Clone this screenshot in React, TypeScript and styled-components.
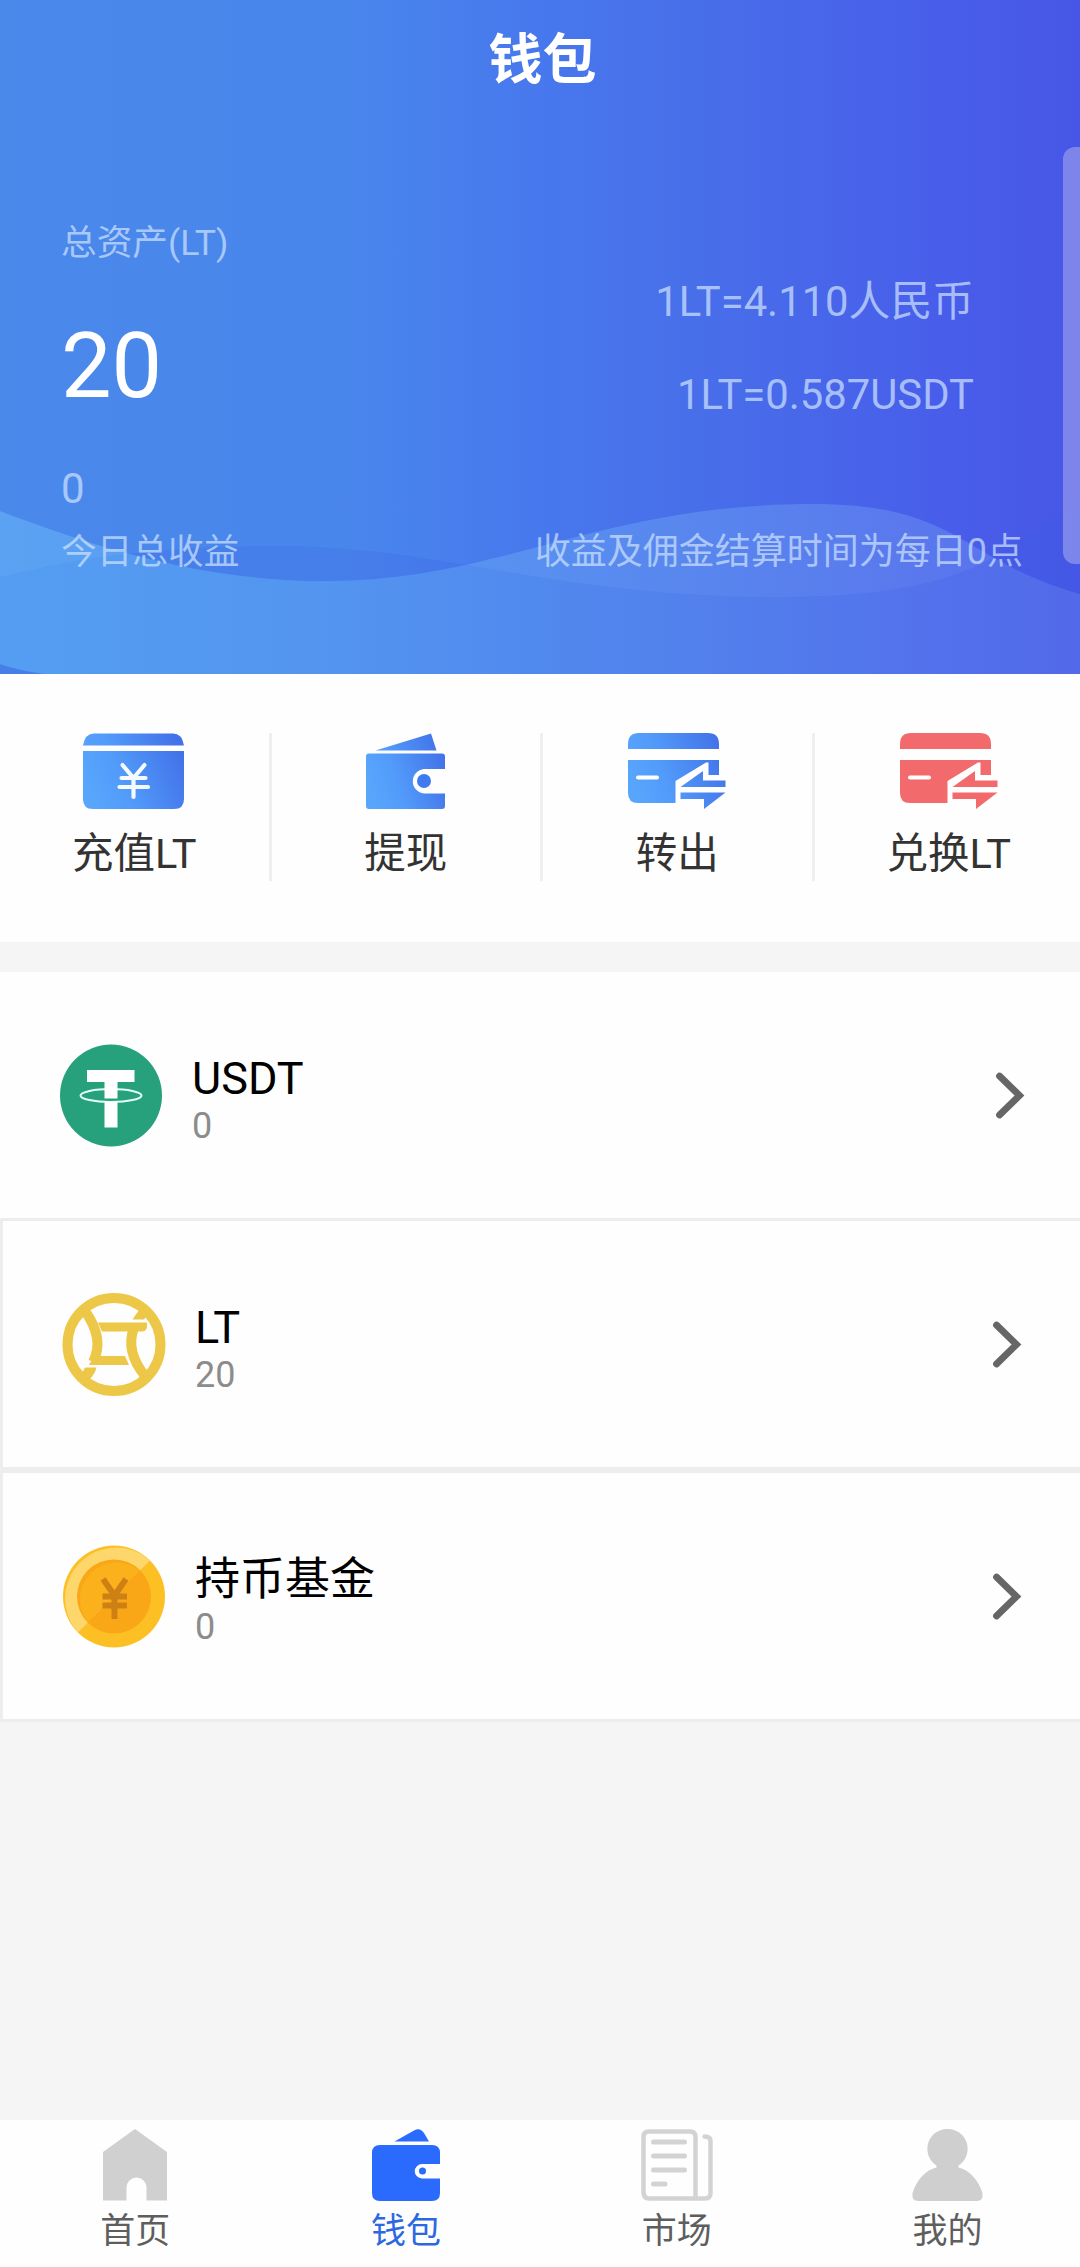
import React from "react";
import styled, { createGlobalStyle } from "styled-components";

const GlobalStyle = createGlobalStyle`
  * { box-sizing: border-box; }
  body {
    margin: 0;
    background: #f5f5f5;
    font-family: Roboto, "Noto Sans CJK SC", sans-serif;
  }
  svg { display: block; overflow: visible; flex: none; }
`;

const Screen = styled.div`
  width: 1080px;
  height: 2267px;
  display: flex;
  flex-direction: column;
  background: #f5f5f5;
  overflow: hidden;
`;

const Hero = styled.header`
  position: relative;
  height: 674px;
  overflow: hidden;
  color: #fff;
  background: linear-gradient(90deg, #4a88ea 0%, #4986ec 32%, #4778ed 50%, #4870ea 62%, #4867ea 75%, #485dea 88%, #4756e6 100%);
`;

const Waves = styled.svg`
  position: absolute;
  left: 0;
  bottom: 0;
`;

const SideHandle = styled.div`
  position: absolute;
  top: 147px;
  right: -20px;
  width: 37px;
  height: 417px;
  border-radius: 12px;
  background: rgba(180, 180, 240, 0.5);
`;

const HeroContent = styled.div`
  position: relative;
  display: flex;
  flex-direction: column;
`;

const Title = styled.h1`
  margin: 0;
  padding: 2px 0 0 5px;
  height: 117px;
  line-height: 117px;
  font-size: 54px;
  font-weight: 700;
  text-align: center;
`;

const Summary = styled.div`
  display: flex;
  justify-content: space-between;
  padding: 101px 106px 0 61px;
`;

const Balance = styled.div`
  display: flex;
  flex-direction: column;
`;

const Rates = styled.div`
  display: flex;
  flex-direction: column;
  align-items: flex-end;
  gap: 43px;
  padding-top: 59px;
`;

const Muted = styled.div<{ $size: number }>`
  font-size: ${(p) => p.$size}px;
  line-height: 50px;
  color: rgba(205, 226, 255, 0.72);
  white-space: nowrap;
`;

const Amount = styled.div`
  margin: 45px 0 43px;
  font-size: 90px;
  line-height: 108px;
`;

const HeroFooter = styled.div`
  display: flex;
  justify-content: space-between;
  padding: 13px 57px 0 61px;
`;

/* The four columns run a few pixels past the right edge of the screen. */
const Actions = styled.nav`
  display: flex;
  height: 268px;
  margin-right: -6px;
  padding-top: 59px;
  background: #fefefe;
`;

const Action = styled.div`
  flex: 1;
  height: 148px;
  display: flex;
  flex-direction: column;
  align-items: center;
  border-right: 3px solid #efefef;
  &:last-child { border-right-color: transparent; }
`;

const ActionLabel = styled.span`
  margin-top: 20px;
  font-size: 41.5px;
  line-height: 50px;
  color: #333;
`;

const Assets = styled.main`
  margin-top: 30px;
`;

const Asset = styled.div<{ $boxed?: boolean }>`
  display: flex;
  align-items: center;
  height: ${(p) => (p.$boxed ? 252 : 246)}px;
  padding: 0 ${(p) => (p.$boxed ? 60 : 57)}px 0 60px;
  background: #fefefe;
  border: ${(p) => (p.$boxed ? "3px solid #ededed" : "0")};
  border-right: 0;
`;

const AssetText = styled.div`
  flex: 1;
  margin-left: 29px;
  padding-top: 9px;
`;

const AssetName = styled.div`
  font-size: 45px;
  line-height: 52px;
  color: #000;
`;

const AssetValue = styled.div`
  font-size: 36px;
  line-height: 42px;
  color: #8c8c8c;
`;

const TabBar = styled.footer`
  display: flex;
  height: 147px;
  margin: auto -3px 0 0;
  padding-top: 9px;
  background: #fefefe;
`;

const Tab = styled.div<{ $active?: boolean }>`
  flex: 1;
  display: flex;
  flex-direction: column;
  align-items: center;
  color: ${(p) => (p.$active ? "#2c68e0" : "#5e5e5e")};
  font-size: 35px;
  line-height: 48px;
  gap: 7px;
`;

const BlueGradient = ({ id }: { id: string }) => (
  <defs>
    <linearGradient id={id} x1="0" y1="0.6" x2="1" y2="0.3">
      <stop offset="0" stopColor="#58a6fc" />
      <stop offset="0.35" stopColor="#529bfa" />
      <stop offset="1" stopColor="#4272e8" />
    </linearGradient>
  </defs>
);

const DepositIcon = () => (
  <svg width="102" height="76" viewBox="0 0 102 76">
    <BlueGradient id="deposit" />
    <path
      fill="url(#deposit)"
      d="M0 12.5Q2 .5 11 .5H90Q99 .5 101 12.5ZM0 18H101V66Q101 76 91 76H10Q0 76 0 66Z"
    />
    <path
      d="M39.5 32L50.5 45L61.5 32M38.5 45H62.5M36.5 54H65M50.5 45V64"
      fill="none"
      stroke="#f4fbff"
      strokeWidth="4.2"
      strokeLinecap="round"
    />
  </svg>
);

const WithdrawIcon = () => (
  <svg width="79" height="76" viewBox="0 0 79 76">
    <BlueGradient id="withdraw" />
    <path
      fill="url(#withdraw)"
      d="M9.5 17.5L65 .5L70.5 17.5ZM3 20.5H76Q79 20.5 79 23.5V36H58A12.3 12.3 0 0 0 58 60.5H79V73Q79 76 76 76H3Q0 76 0 73V23.5Q0 20.5 3 20.5Z"
    />
    <circle cx="58" cy="48" r="7" fill="#3f7af0" />
  </svg>
);

const TransferIcon = ({ id, fill }: { id: string; fill?: string }) => (
  <svg width="98" height="76" viewBox="0 0 98 76">
    <BlueGradient id={id} />
    <path
      fill={fill || `url(#${id})`}
      d="M0 16V11Q0 0 11 0H80Q91 0 91 11V16ZM0 27H91V42H80.5V29.5H78L47.5 48V70H10Q0 70 0 60ZM52.5 54L75 38V47.5H97.5V54ZM52.5 59.5H97.5L76 76V66H52.5Z"
    />
    <path d="M10 44.5H29" stroke="#fff" strokeWidth="4" strokeLinecap="round" />
  </svg>
);

const TetherIcon = () => (
  <svg width="103" height="103" viewBox="0 0 103 103">
    <circle cx="51" cy="51.5" r="51" fill="#27a17b" />
    <ellipse cx="51" cy="51.5" rx="30.5" ry="6.5" fill="none" stroke="#e4fff6" strokeWidth="2" />
    <path fill="#fff" d="M27 26H74.5V38H57.5V54.5H44.5V38H27ZM44.5 58H57.5V83.5H44.5Z" />
  </svg>
);

const LtIcon = () => (
  <svg width="103" height="103" viewBox="0 0 103 103" fill="none" stroke="#edc848">
    <circle cx="51" cy="51.5" r="46.5" strokeWidth="10" />
    <path strokeWidth="10" d="M22 18Q42 46 30 69" />
    <path strokeWidth="10" d="M82 83Q62 58 71 35" />
    <path fill="#edc848" stroke="none" d="M35 29.5H84V34Q83 38.5 79 38.5H39ZM66 72H26L31 63H62Z" />
    <path fill="#edc848" stroke="none" d="M22 74.5H33.5Q32 81 26 87L17 84ZM81 26.5H69.5Q73 21 77 16L86 19Z" />
  </svg>
);

const FundIcon = () => (
  <svg width="103" height="103" viewBox="0 0 103 103">
    <circle cx="51" cy="51.5" r="51" fill="#fdc024" />
    <path fill="#fdd66c" d="M15 87.5A51 51 0 0 1 87 15.5Z" />
    <circle cx="51" cy="51.5" r="37" fill="#f9a716" />
    <path fill="#fbb11b" d="M25 77.5A37 37 0 0 1 77 25.5Z" />
    <path
      d="M40 34L51.5 50.5L63 34M39.5 51.5H64M39.5 60.5H64M51.5 50V74"
      fill="none"
      stroke="#cd8014"
      strokeWidth="6"
    />
  </svg>
);

const Chevron = () => (
  <svg width="26" height="45" viewBox="0 0 26 45">
    <path
      d="M2.5 3L22.5 22.5L2.5 42"
      fill="none"
      stroke="#666"
      strokeWidth="6.8"
      strokeLinecap="round"
    />
  </svg>
);

const HomeIcon = () => (
  <svg width="64" height="72" viewBox="0 0 64 72">
    <path fill="#d0d0d0" d="M32 0L64 23V71.5H43.5V58.5A10 10 0 0 0 23.5 58.5V71.5H0V23Z" />
  </svg>
);

const WalletIcon = () => (
  <svg width="68" height="72" viewBox="0 0 68 72">
    <path
      fill="#2a6afc"
      d="M22.5 12.5L42 1.5Q48-2 52 4L57 12.5ZM8 16H60Q68 16 68 24V35H50A7.2 7.2 0 0 0 50 49.5H68V64Q68 72 60 72H8Q0 72 0 64V24Q0 16 8 16Z"
    />
    <circle cx="50.5" cy="42" r="3.5" fill="#2a6afc" />
  </svg>
);

const MarketIcon = () => (
  <svg width="72" height="72" viewBox="0 0 72 72" fill="none" stroke="#d3d3d3" strokeLinecap="round">
    <path strokeWidth="4.5" d="M54.5 69.5V8Q54.5 2.5 49 2.5H8Q2.5 2.5 2.5 8V63Q2.5 69.5 8.5 69.5H64Q69.5 69.5 69.5 64V12Q69.5 7.5 63.5 7.5" />
    <path strokeWidth="5" d="M12.5 13H43.5M12.5 27H43.5M12.5 41H43.5M12.5 55H24" />
  </svg>
);

const UserIcon = () => (
  <svg width="71" height="72" viewBox="0 0 71 72">
    <path
      fill="#cfcfcf"
      d="M35.5 0A19.8 19.8 0 0 1 46.5 36.5V38.5C57 41 66 50 70.5 64Q71.5 72 65 72H6Q-.5 72 .5 64C5 50 14 41 24.5 38.5V36.5A19.8 19.8 0 0 1 35.5 0Z"
    />
  </svg>
);

const actions = [
  { label: "充值LT", icon: <DepositIcon /> },
  { label: "提现", icon: <WithdrawIcon /> },
  { label: "转出", icon: <TransferIcon id="transfer" /> },
  { label: "兑换LT", icon: <TransferIcon id="exchange" fill="#f26a6c" /> },
];

const assets = [
  { name: "USDT", value: "0", icon: <TetherIcon />, boxed: false },
  { name: "LT", value: "20", icon: <LtIcon />, boxed: true },
  { name: "持币基金", value: "0", icon: <FundIcon />, boxed: true },
];

const tabs = [
  { label: "首页", icon: <HomeIcon />, active: false },
  { label: "钱包", icon: <WalletIcon />, active: true },
  { label: "市场", icon: <MarketIcon />, active: false },
  { label: "我的", icon: <UserIcon />, active: false },
];

const FRONT_WAVE =
  "M0 511C110 553 210 581 325 581C500 581 600 504 813 504C960 504 960 560 1080 594V674H45Q20 671 0 664Z";
const BACK_CREST = "M0 577C110 550 190 546 290 546C450 549 560 597 780 597C990 597 1010 540 1080 500";

export default function App() {
  return (
    <Screen>
      <GlobalStyle />
      <Hero>
        <Waves width="1080" height="200" viewBox="0 474 1080 200">
          <defs>
            <linearGradient id="wave" x1="0" x2="1" y1="0" y2="0">
              <stop offset="0" stopColor="#62bcfb" stopOpacity="0.5" />
              <stop offset="0.5" stopColor="#62a8f2" stopOpacity="0.42" />
              <stop offset="1" stopColor="#6e8cf0" stopOpacity="0.34" />
            </linearGradient>
            <clipPath id="front">
              <path d={FRONT_WAVE} />
            </clipPath>
          </defs>
          <path fill="#3c5fe6" fillOpacity="0.2" d={`${BACK_CREST}V674H0Z`} />
          <path fill="url(#wave)" d={FRONT_WAVE} />
          <path
            fill="#86a8f4"
            fillOpacity="0.12"
            clipPath="url(#front)"
            d={`${BACK_CREST}V474H0Z`}
          />
        </Waves>
        <HeroContent>
          <Title>钱包</Title>
          <Summary>
            <Balance>
              <Muted $size={35.7}>总资产(LT)</Muted>
              <Amount>20</Amount>
              <Muted $size={42}>0</Muted>
            </Balance>
            <Rates>
              <Muted $size={41.8}>1LT=4.110人民币</Muted>
              <Muted $size={41.8}>1LT=0.587USDT</Muted>
            </Rates>
          </Summary>
          <HeroFooter>
            <Muted $size={35.7}>今日总收益</Muted>
            <Muted $size={36}>收益及佣金结算时间为每日0点</Muted>
          </HeroFooter>
        </HeroContent>
        <SideHandle />
      </Hero>
      <Actions>
        {actions.map((a) => (
          <Action key={a.label}>
            {a.icon}
            <ActionLabel>{a.label}</ActionLabel>
          </Action>
        ))}
      </Actions>
      <Assets>
        {assets.map((a) => (
          <Asset key={a.name} $boxed={a.boxed}>
            {a.icon}
            <AssetText>
              <AssetName>{a.name}</AssetName>
              <AssetValue>{a.value}</AssetValue>
            </AssetText>
            <Chevron />
          </Asset>
        ))}
      </Assets>
      <TabBar>
        {tabs.map((t) => (
          <Tab key={t.label} $active={t.active}>
            {t.icon}
            <span>{t.label}</span>
          </Tab>
        ))}
      </TabBar>
    </Screen>
  );
}
